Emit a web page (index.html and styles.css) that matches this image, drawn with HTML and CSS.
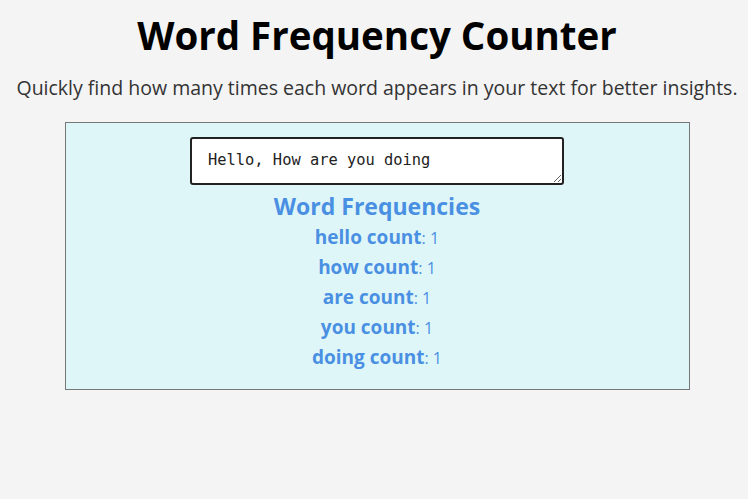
FILE: index.html
```html
<!DOCTYPE html>
<html>
<head>
<meta charset="utf-8">
<link rel="stylesheet" href="styles.css">
</head>
<body>
<div class="page">
  <h1 class="title">Word Frequency Counter</h1>
  <p class="subtitle">Quickly find how many times each word appears in your text for better insights.</p>
  <div class="panel">
    <textarea class="input">Hello, How are you doing</textarea>
    <h2 class="freq-title">Word Frequencies</h2>
    <ul class="freq-list">
      <li><span class="word">hello count</span>: 1</li>
      <li><span class="word">how count</span>: 1</li>
      <li><span class="word">are count</span>: 1</li>
      <li><span class="word">you count</span>: 1</li>
      <li><span class="word">doing count</span>: 1</li>
    </ul>
  </div>
</div>
</body>
</html>
```
FILE: styles.css
```css
html, body {
  margin: 0;
  padding: 0;
  background: #f4f4f4;
}
body {
  font-family: "Open Sans", Lato, sans-serif;
  color: #000;
}
.page {
  padding: 0 0 0 6px;
  display: flex;
  flex-direction: column;
  align-items: center;
}
.title {
  margin: 11px 0 0;
  font-size: 38.5px;
  font-weight: 700;
  line-height: 48px;
}
.subtitle {
  margin: 17px 0 0;
  font-size: 19.5px;
  line-height: 24px;
  color: #333;
  white-space: nowrap;
}
.panel {
  margin-top: 22px;
  width: 623px;
  border: 1px solid #777;
  background: #dff6f9;
  display: flex;
  flex-direction: column;
  align-items: center;
  padding: 14px 0 16px;
}
.input {
  box-sizing: border-box;
  width: 374px;
  height: 48px;
  border: 2px solid #222;
  border-radius: 3px;
  background: #fff;
  font-family: "DejaVu Sans Mono", monospace;
  font-size: 15.4px;
  padding: 12px 16px 8px;
  color: #222;
  resize: vertical;
  margin: 0;
  display: block;
}
.freq-title {
  margin: 7px 0 0;
  font-size: 23px;
  line-height: 28px;
  font-weight: 700;
  color: #4a90e2;
}
.freq-list {
  list-style: none;
  margin: 3px 0 0;
  padding: 0;
  text-align: center;
  color: #4a90e2;
}
.freq-list li {
  font-size: 16px;
  line-height: 30px;
}
.word {
  font-size: 19px;
  line-height: 1;
  font-weight: 700;
}
```
